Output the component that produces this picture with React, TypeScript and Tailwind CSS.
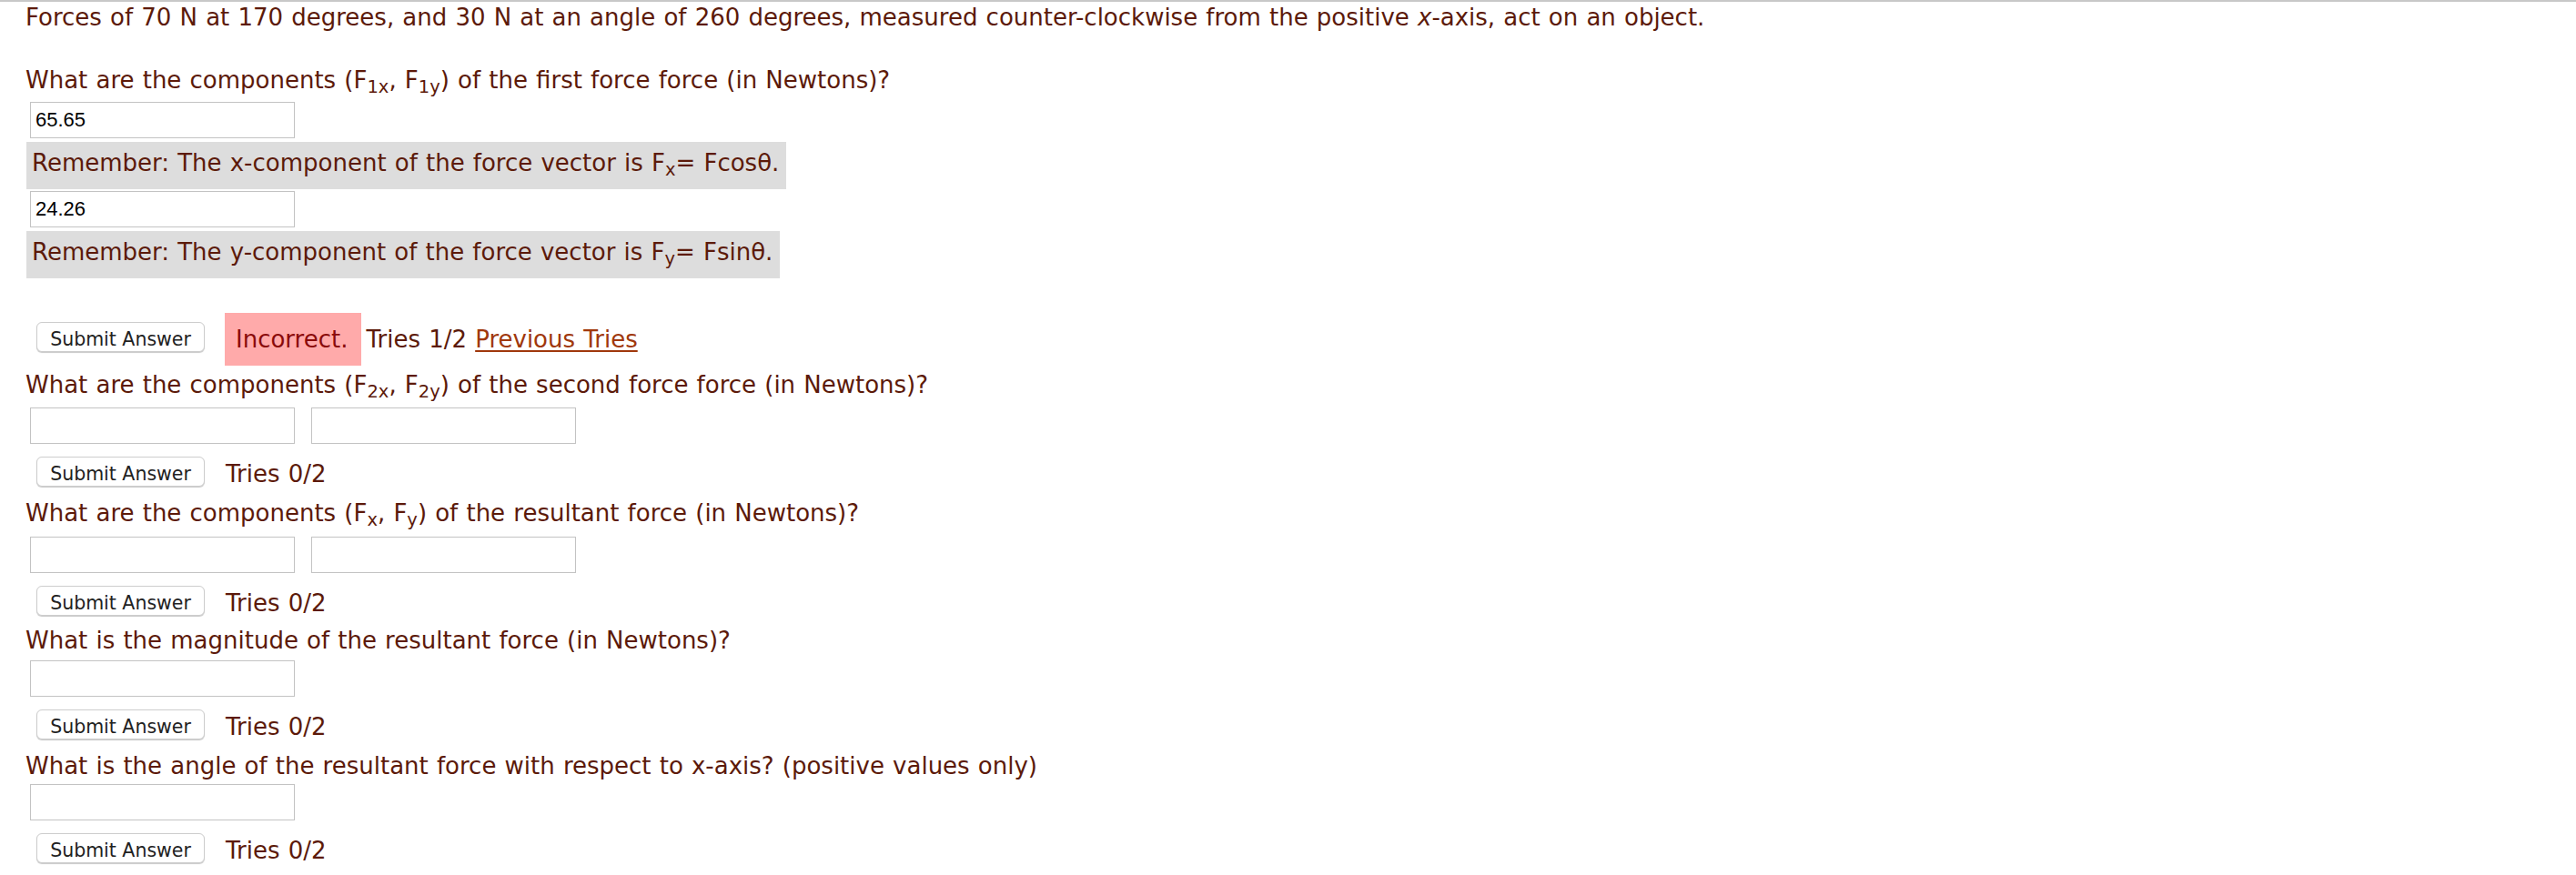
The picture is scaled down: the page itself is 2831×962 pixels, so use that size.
import React from "react";

const textColor = "text-[#5c1a0a]";

function Input({ value }: { value?: string }) {
  return (
    <input
      type="text"
      readOnly
      defaultValue={value ?? ""}
      className="w-[291px] h-[40px] border border-[#c3c3c3] bg-white px-[5px] text-[22px] text-black font-['Liberation_Sans',Arial,sans-serif] outline-none"
    />
  );
}

function SubmitButton() {
  return (
    <button
      type="button"
      className="w-[185px] h-[33px] rounded-[6px] border border-[#cdcdcd] bg-white pt-[5px] text-[20.5px] leading-[24px] text-[#222] font-['DejaVu_Sans',Verdana,sans-serif] shadow-[0_1px_1px_rgba(0,0,0,0.22)]"
    >
      Submit Answer
    </button>
  );
}

function TriesRow({ className = "" }: { className?: string }) {
  return (
    <div className={`flex items-center h-[33px] pl-[12px] ${className}`}>
      <SubmitButton />
      <span className="ml-[23px] pt-[5px] leading-[32px]">Tries 0/2</span>
    </div>
  );
}

export default function App() {
  return (
    <div className={`min-h-[962px] bg-white font-['DejaVu_Sans',Verdana,sans-serif] text-[26px] [word-spacing:0.9px] ${textColor}`}>
      <div className="h-[2px] w-full bg-[#c8c8c8]" />
      <div className="pl-[28px]">
        <p className="mt-[1px] leading-[32px]">
          Forces of 70 N at 170 degrees, and 30 N at an angle of 260 degrees, measured counter-clockwise from the positive{" "}
          <i>x</i>-axis, act on an object.
        </p>

        <p className="mt-[37px] leading-[32px]">
          What are the components (F<sub>1x</sub>, F<sub>1y</sub>) of the first force force (in Newtons)?
        </p>
        <div className="mt-[8px] pl-[5px] flex">
          <Input value="65.65" />
        </div>
        <div className="mt-[4px] ml-px">
          <div className="inline-block bg-[#dddddd] pl-[6px] pr-[8px] pt-[7px] pb-[13px] leading-[32px]">
            Remember: The x-component of the force vector is F<sub>x</sub>= Fcosθ.
          </div>
        </div>
        <div className="mt-[2px] pl-[5px] flex">
          <Input value="24.26" />
        </div>
        <div className="mt-[4px] ml-px">
          <div className="inline-block bg-[#dddddd] pl-[6px] pr-[8px] pt-[7px] pb-[13px] leading-[32px]">
            Remember: The y-component of the force vector is F<sub>y</sub>= Fsinθ.
          </div>
        </div>

        <div className="mt-[38px] flex items-center h-[58px] pl-[12px]">
          <div className="mb-[3px]">
            <SubmitButton />
          </div>
          <div className="ml-[22px] flex items-baseline leading-[32px]">
            <span className="bg-[#ffaaaa] text-[#8a0a0a] pl-[12px] pr-[15px] pt-[13px] pb-[13px]">Incorrect.</span>
            <span className="ml-[5px]">
              Tries 1/2{" "}
              <a href="#" className="text-[#a0380c] underline underline-offset-[3px]">
                Previous Tries
              </a>
            </span>
          </div>
        </div>

        <p className="mt-[5px] leading-[32px]">
          What are the components (F<sub>2x</sub>, F<sub>2y</sub>) of the second force force (in Newtons)?
        </p>
        <div className="mt-[9px] pl-[5px] flex gap-[18px]">
          <Input />
          <Input />
        </div>
        <TriesRow className="mt-[14px]" />

        <p className="mt-[13px] leading-[32px]">
          What are the components (F<sub>x</sub>, F<sub>y</sub>) of the resultant force (in Newtons)?
        </p>
        <div className="mt-[10px] pl-[5px] flex gap-[18px]">
          <Input />
          <Input />
        </div>
        <TriesRow className="mt-[14px]" />

        <p className="mt-[11px] leading-[32px]">What is the magnitude of the resultant force (in Newtons)?</p>
        <div className="mt-[6px] pl-[5px] flex">
          <Input />
        </div>
        <TriesRow className="mt-[14px]" />

        <p className="mt-[13px] leading-[32px]">
          What is the angle of the resultant force with respect to x-axis? (positive values only)
        </p>
        <div className="mt-[4px] pl-[5px] flex">
          <Input />
        </div>
        <TriesRow className="mt-[14px]" />
      </div>
    </div>
  );
}
